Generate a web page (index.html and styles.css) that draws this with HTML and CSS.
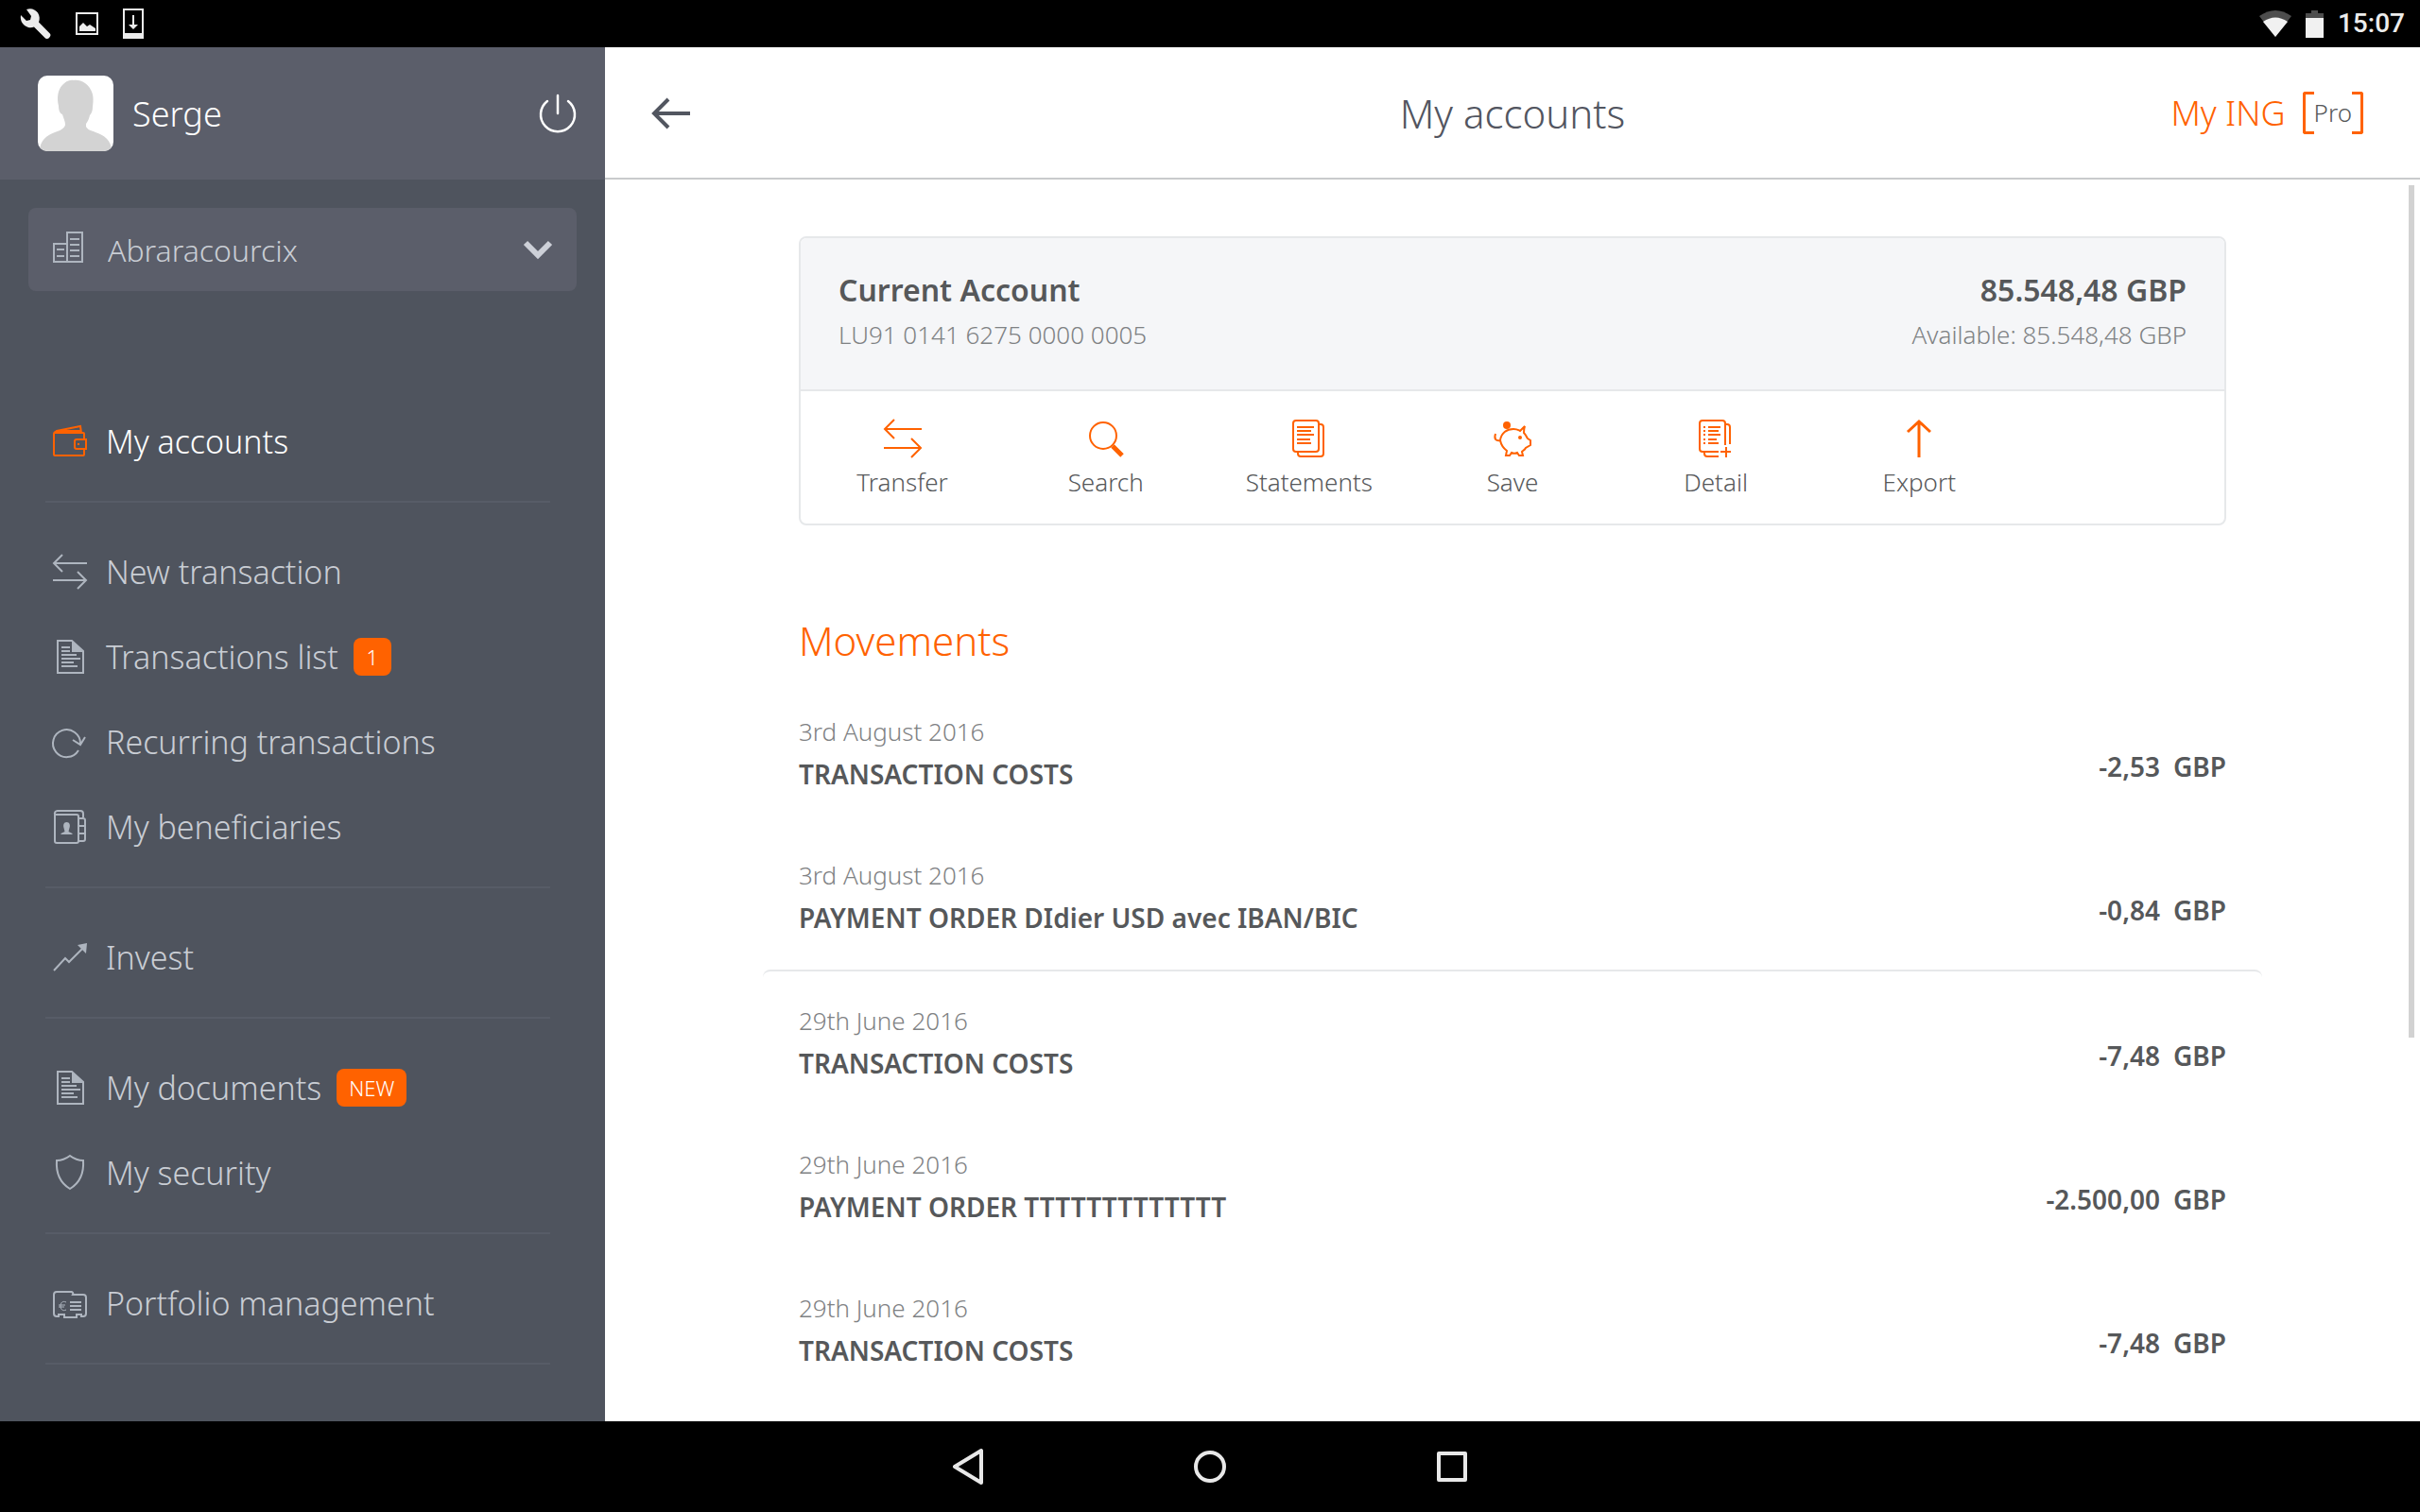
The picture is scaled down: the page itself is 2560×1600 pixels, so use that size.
FILE: index.html
```html
<!DOCTYPE html>
<html lang="en">
<head>
<meta charset="utf-8">
<meta name="viewport" content="width=device-width, initial-scale=1">
<title>My accounts</title>
<link rel="stylesheet" href="styles.css">
</head>
<body>
<svg class="defs" aria-hidden="true">
  <symbol id="i-transfer" viewBox="0 0 36 36">
    <path d="M36 9H1M10 0L1 9l9 9M0 27h35M26 18l9 9-9 9"/>
  </symbol>
  <symbol id="i-doc" viewBox="0 0 36 36">
    <path d="M5 1h15l12 11v23H5z"/>
    <path class="solid" d="M20 1v12h12z"/>
    <path d="M9 8h9M9 12h9M9 16h16M9 20h20M9 24h13M9 28h17"/>
  </symbol>
</svg>

<header class="statusbar">
  <div class="status-group status-left">
    <svg width="32" height="32" viewBox="0 0 32 32" aria-hidden="true"><path fill="#ececec" d="M6 1l5 7-1 4-4 1-6-6C-1 13 2 18 8 20c2 .5 4 .3 6-.4l12 11.8c1.500 1 3 .8 4-.4 1.500-1.500 2-3 .8-4.400L19 14.500c1.300-3 1-7-1-10C15 1 11-1 6 1z"/></svg>
    <svg width="24" height="24" viewBox="0 0 24 24" aria-hidden="true"><path fill="none" stroke="#ececec" stroke-width="2" d="M1 1h22v22H1z"/><path fill="#ececec" d="M4 20v-5l4-4 4 4 3-2 6 4v3z"/></svg>
    <svg width="22" height="32" viewBox="0 0 22 32" aria-hidden="true"><path fill="none" stroke="#ececec" stroke-width="2" d="M1 1h20v30H1z"/><path fill="#ececec" d="M1 26h20v6H1zM10 7h2v10h4l-5 5-5-5h4z"/></svg>
  </div>
  <div class="status-group status-right">
    <svg width="34" height="28" viewBox="0 0 34 28" aria-hidden="true"><path fill="#4d4d4d" d="M0 6Q17-6 34 6L17 28z"/><path fill="#f1f1f1" d="M4 12q13-9 26 0L17 28z"/></svg>
    <svg width="19" height="29" viewBox="0 0 19 29" aria-hidden="true"><path fill="#4d4d4d" d="M6 0h7v3h6v6H0V3h6z"/><path fill="#f1f1f1" d="M0 8h19v21H0z"/></svg>
    <time class="clock">15:07</time>
  </div>
</header>

<div class="app">
  <aside class="sidebar">
    <div class="profile">
      <svg class="avatar" viewBox="0 0 80 80" role="img" aria-label="Profile picture"><path fill="#d3d3d3" d="M2 80C2 68 10 63 18 60c6-2 10-4 11-8 0-4-2-7-3-11-3-1-4-5-4-9-2-8-1-17 4-22 3-3 7-6 12-5 8-1 15 4 18 10 3 5 3 11 2 18 0 4-1 7-3 9-1 4-2 6-4 9v3c2 4 6 4 10 6 9 3 17 8 17 20z"/></svg>
      <span class="profile-name">Serge</span>
      <button class="icon-button" type="button" aria-label="Log out">
        <svg width="38" height="40" viewBox="0 0 38 40" aria-hidden="true"><path fill="none" stroke="#fff" stroke-width="2.500" stroke-linecap="round" d="M19 1v19M8 7a18 18 0 1 0 22 0"/></svg>
      </button>
    </div>

    <div class="company">
      <svg class="icon" viewBox="0 0 36 36" aria-hidden="true"><path d="M15 0h16v31H15zM1 12h14v19H1zM18 7h10M18 13h10M18 19h10M18 25h10M4 18h8M4 25h8"/></svg>
      <select class="company-select" aria-label="Company">
        <option>Abraracourcix</option>
      </select>
      <svg class="chevron" width="30" height="20" viewBox="0 0 30 20" aria-hidden="true"><path fill="none" stroke="#cdd0d8" stroke-width="6" d="M2 3l13 13L28 3"/></svg>
    </div>

    <nav class="menu">
      <ul class="menu-group">
        <li><a class="menu-item active" href="#"><svg class="icon" viewBox="0 0 36 36" aria-hidden="true"><path d="M33 15v-5a1 1 0 0 0-1-1H2a1 1 0 0 0-1 1v22a1 1 0 0 0 1 1h30a1 1 0 0 0 1-1v-5M1 9l3-2 25-5 1 7M4 7h26M25 16h10v10H25a2 2 0 0 1-2-2v-6a2 2 0 0 1 2-2zM27 20v2"/></svg>My accounts</a></li>
      </ul>
      <ul class="menu-group">
        <li><a class="menu-item" href="#"><svg class="icon" aria-hidden="true"><use href="#i-transfer"/></svg>New transaction</a></li>
        <li><a class="menu-item" href="#"><svg class="icon" aria-hidden="true"><use href="#i-doc"/></svg>Transactions list<span class="badge">1</span></a></li>
        <li><a class="menu-item" href="#"><svg class="icon" viewBox="0 0 36 36" aria-hidden="true"><path d="M27 27A14.500 14.500 0 1 1 29 20M21 16l8 5 5-8"/></svg>Recurring transactions</a></li>
        <li><a class="menu-item" href="#"><svg class="icon" viewBox="0 0 36 36" aria-hidden="true"><path d="M2 5v28a2 2 0 0 0 2 2h21a2 2 0 0 0 2-2V7a2 2 0 0 0-2-2H2a3 3 0 0 1 3-4h24a3 3 0 0 1 3 3v4M27 9h5a2 2 0 0 1 2 2v20a2 2 0 0 1-2 2h-5M27 17h7M27 25h7"/><path class="solid" d="M14.500 13c3 0 4 3 3 6l-1 4 4 2v1h-12v-1l4-2-1-4c-1-3 0-6 3-6z"/></svg>My beneficiaries</a></li>
      </ul>
      <ul class="menu-group">
        <li><a class="menu-item" href="#"><svg class="icon" viewBox="0 0 36 36" aria-hidden="true"><path d="M1 32l12-13 4 4L31 9"/><path class="solid" d="M26 5l10-2-1 11z"/></svg>Invest</a></li>
      </ul>
      <ul class="menu-group">
        <li><a class="menu-item" href="#"><svg class="icon" aria-hidden="true"><use href="#i-doc"/></svg>My documents<span class="badge">NEW</span></a></li>
        <li><a class="menu-item" href="#"><svg class="icon" viewBox="0 0 36 36" aria-hidden="true"><path d="M18 0c4 3 8 5 14 5 1 15-4 24-14 30C8 29 3 20 4 5c6 0 10-2 14-5z"/></svg>My security</a></li>
      </ul>
      <ul class="menu-group">
        <li><a class="menu-item" href="#"><svg class="icon" viewBox="0 0 36 36" aria-hidden="true"><path d="M4 6h15a2 2 0 0 1 2 3h11a3 3 0 0 1 3 3v17a3 3 0 0 1-3 3h-2v-2h-5v3H12v-3H6v2H4a3 3 0 0 1-3-3V9a3 3 0 0 1 3-3zM18 17h12M18 21h12M18 25h12"/><path class="fine" d="M14 17c-4-2-6 1-6 4s2 6 6 4M6 20h7M6 22h6"/></svg>Portfolio management</a></li>
      </ul>
    </nav>
  </aside>

  <main class="main">
    <header class="topbar">
      <button class="icon-button" type="button" aria-label="Back">
        <svg width="40" height="34" viewBox="0 0 40 34" aria-hidden="true"><path fill="none" stroke="#525660" stroke-width="4" d="M40 18H3M17 3L2 18l15 15"/></svg>
      </button>
      <h1 class="page-title">My accounts</h1>
      <div class="brand">
        <span class="brand-name">My ING</span>
        <span class="brand-pro">Pro</span>
      </div>
    </header>

    <div class="content">
      <section class="account">
        <div class="account-head">
          <div>
            <h2 class="account-title">Current Account</h2>
            <p class="account-sub">LU91 0141 6275 0000 0005</p>
          </div>
          <div class="account-balance">
            <p class="account-title">85.548,48 GBP</p>
            <p class="account-sub">Available: 85.548,48 GBP</p>
          </div>
        </div>
        <div class="actions">
          <button class="action" type="button"><svg class="action-icon" viewBox="0 0 40 40" aria-hidden="true"><path d="M40 10H1M11 0L1 10l10 10M0 30h39M29 20l10 10-10 10"/></svg>Transfer</button>
          <button class="action" type="button"><svg class="action-icon" viewBox="0 0 40 40" aria-hidden="true"><circle cx="17" cy="17" r="14"/><path class="thick" d="M27 28l10 10"/></svg>Search</button>
          <button class="action" type="button"><svg class="action-icon" viewBox="0 0 40 40" aria-hidden="true"><path d="M6 1h21a3 3 0 0 1 3 3v27a3 3 0 0 1-3 3H6a3 3 0 0 1-3-3V4a3 3 0 0 1 3-3zM30 5h2a3 3 0 0 1 3 3v28a3 3 0 0 1-3 3H11a3 3 0 0 1-3-3v-2M7 8h18M7 12h15M7 16h18M7 21h14M7 25h15"/></svg>Statements</button>
          <button class="action" type="button"><svg class="action-icon" viewBox="0 0 40 40" aria-hidden="true"><path d="M2 15c-2 6 1 8 5 7 1-8 7-12 14-12 4 0 5 1 7 2l5-5c-1 3-1 5-1 7 3 3 3 5 4 6l3 2v5l-5 3c-1 2-3 3-4 4l1 4h-4l-2-3c-2 1-4 1-6 0l-2 3h-4l1-5c-4-3-6-6-7-11"/><circle class="solid" cx="14" cy="6" r="4"/><circle class="solid" cx="28" cy="19" r="2"/></svg>Save</button>
          <button class="action" type="button"><svg class="action-icon" viewBox="0 0 40 40" aria-hidden="true"><path d="M23 34H6a3 3 0 0 1-3-3V4a3 3 0 0 1 3-3h21a3 3 0 0 1 3 3v23M30 5h2a3 3 0 0 1 3 3v18M8 34v2a3 3 0 0 0 3 3h12M7 8h2M12 8h13M7 12h2M12 12h11M7 16h2M12 16h13M7 21h2M12 21h9M7 25h2M12 25h11M31 29v11M25 34h11"/></svg>Detail</button>
          <button class="action" type="button"><svg class="action-icon" viewBox="0 0 40 40" aria-hidden="true"><path class="medium" d="M20 40V2M8 13L20 2l12 11"/></svg>Export</button>
        </div>
      </section>

      <section class="movements">
        <h2 class="movements-title">Movements</h2>
        <ul class="day">
          <li class="movement"><div><p class="date">3rd August 2016</p><p class="label">TRANSACTION COSTS</p></div><p class="amount"><span>-2,53</span><span>GBP</span></p></li>
          <li class="movement"><div><p class="date">3rd August 2016</p><p class="label">PAYMENT ORDER DIdier USD avec IBAN/BIC</p></div><p class="amount"><span>-0,84</span><span>GBP</span></p></li>
        </ul>
        <ul class="day">
          <li class="movement"><div><p class="date">29th June 2016</p><p class="label">TRANSACTION COSTS</p></div><p class="amount"><span>-7,48</span><span>GBP</span></p></li>
          <li class="movement"><div><p class="date">29th June 2016</p><p class="label">PAYMENT ORDER TTTTTTTTTTTTT</p></div><p class="amount"><span>-2.500,00</span><span>GBP</span></p></li>
          <li class="movement"><div><p class="date">29th June 2016</p><p class="label">TRANSACTION COSTS</p></div><p class="amount"><span>-7,48</span><span>GBP</span></p></li>
        </ul>
      </section>
      <div class="scroll-thumb"></div>
    </div>
  </main>
</div>

<footer class="navbar">
  <button class="nav-button" type="button" aria-label="Back"><svg width="40" height="40" viewBox="0 0 40 40" aria-hidden="true"><path d="M34 3v34L6 20z"/></svg></button>
  <button class="nav-button" type="button" aria-label="Home"><svg width="40" height="40" viewBox="0 0 40 40" aria-hidden="true"><circle cx="20" cy="20" r="15"/></svg></button>
  <button class="nav-button" type="button" aria-label="Recent apps"><svg width="40" height="40" viewBox="0 0 40 40" aria-hidden="true"><path d="M6 6h28v28H6z"/></svg></button>
</footer>
</body>
</html>
```
FILE: styles.css
```css
:root {
  --orange: #ff6200;
  --line: #e6e8ea;
  --text: #56585a;
  --muted: #7f8284;
  --menu: #c9cdd4;
}

* {
  box-sizing: border-box;
}

body {
  margin: 0;
  min-height: 100vh;
  display: flex;
  flex-direction: column;
  background: #fff;
  color: var(--text);
  font-family: "Noto Sans", "Open Sans", sans-serif;
  font-weight: 300;
}

h1, h2, p, ul {
  margin: 0;
  padding: 0;
  font-weight: inherit;
}

ul {
  list-style: none;
}

button {
  border: 0;
  padding: 0;
  background: none;
  color: inherit;
  font: inherit;
}

svg {
  display: block;
  flex: none;
  overflow: visible;
}

symbol {
  overflow: visible;
}

.defs {
  position: absolute;
  width: 0;
  height: 0;
}

/* System bars */
.statusbar {
  display: flex;
  justify-content: space-between;
  height: 50px;
  padding: 0 16px 0 22px;
  background: #000;
}

.status-group {
  display: flex;
  align-items: center;
}

.status-left {
  gap: 26px;
}

.status-right {
  gap: 15px;
}

.clock {
  color: #ececec;
  font: 500 28px/50px Roboto, sans-serif;
}

.navbar {
  display: flex;
  justify-content: center;
  height: 96px;
  background: #000;
}

.nav-button {
  display: flex;
  align-items: center;
  justify-content: center;
  width: 256px;
}

.nav-button svg {
  fill: none;
  stroke: #e8e8e8;
  stroke-width: 4px;
  stroke-linejoin: round;
}

.app {
  flex: 1;
  display: grid;
  grid-template-columns: 25% 1fr;
}

/* Sidebar */
.sidebar {
  background: #4f545e;
}

.profile {
  display: flex;
  align-items: center;
  height: 140px;
  padding: 0 31px 0 40px;
  background: #5b5e6a;
}

.avatar {
  width: 80px;
  height: 80px;
  border-radius: 10px;
  background: #fff;
  overflow: hidden;
}

.profile-name {
  flex: 1;
  margin-left: 20px;
  color: #fff;
  font-size: 36px;
}

.company {
  display: flex;
  align-items: center;
  gap: 22px;
  height: 88px;
  margin: 30px 30px 86px;
  padding: 0 26px;
  border-radius: 8px;
  background: #5b5e6a;
}

.company-select {
  flex: 1;
  min-width: 0;
  padding: 0;
  border: 0;
  background: none;
  appearance: none;
  color: var(--menu);
  font: inherit;
  font-size: 32px;
}

.icon {
  width: 36px;
  height: 36px;
  fill: none;
  stroke: #aeb5bf;
  stroke-width: 2px;
}

.icon .fine {
  stroke-width: 1px;
}

.solid {
  fill: #aeb5bf;
  stroke: none;
}

.menu {
  padding: 0 58px 0 48px;
}

.menu-group {
  padding: 28px 8px 18px;
  border-bottom: 2px solid #575c67;
}

.menu-item {
  display: flex;
  align-items: center;
  height: 90px;
  color: var(--menu);
  font-size: 34px;
  text-decoration: none;
  white-space: nowrap;
}

.menu-item .icon {
  margin-right: 20px;
}

.menu-item.active {
  color: #fff;
}

.menu-item.active .icon {
  stroke: var(--orange);
}

.badge {
  min-width: 40px;
  margin-left: 16px;
  padding: 0 13px;
  border-radius: 8px;
  background: var(--orange);
  color: #fff;
  font-size: 22px;
  line-height: 40px;
  text-align: center;
}

/* Main column */
.main {
  display: flex;
  flex-direction: column;
  min-width: 0;
}

.topbar {
  display: grid;
  grid-template-columns: 1fr auto 1fr;
  align-items: center;
  height: 140px;
  padding: 0 60px;
  border-bottom: 2px solid #c9cbcc;
}

.topbar .icon-button {
  justify-self: start;
  margin-left: -10px;
}

.page-title {
  color: #525560;
  font-size: 42px;
}

.brand {
  display: flex;
  align-items: center;
  justify-content: flex-end;
  gap: 18px;
  color: var(--orange);
}

.brand-name {
  font-size: 36px;
}

.brand-pro {
  position: relative;
  padding: 0 12px;
  color: var(--text);
  font-size: 26px;
  line-height: 45px;
}

.brand-pro::before,
.brand-pro::after {
  content: "";
  position: absolute;
  top: 0;
  bottom: 0;
  width: 9px;
  border: 3px solid var(--orange);
}

.brand-pro::before {
  left: 0;
  border-right: 0;
  border-radius: 3px 0 0 3px;
}

.brand-pro::after {
  right: 0;
  border-left: 0;
  border-radius: 0 3px 3px 0;
}

.content {
  position: relative;
  flex: 1;
  padding: 60px 205px 20px;
}

.scroll-thumb {
  position: absolute;
  top: 6px;
  right: 6px;
  width: 6px;
  height: 902px;
  background: #d2d2d2;
}

.account {
  border: 2px solid var(--line);
  border-radius: 8px;
  overflow: hidden;
}

.account-head {
  display: flex;
  justify-content: space-between;
  padding: 32px 40px 40px;
  background: #f5f6f8;
  border-bottom: 2px solid var(--line);
}

.account-balance {
  text-align: right;
}

.account-title {
  font-size: 32px;
  font-weight: 600;
  line-height: 46px;
}

.account-sub {
  margin-top: 6px;
  color: var(--muted);
  font-size: 26px;
  line-height: 36px;
}

.actions {
  display: grid;
  grid-template-columns: repeat(7, 1fr);
  padding: 30px 0 26px;
}

.action {
  display: flex;
  flex-direction: column;
  align-items: center;
  gap: 8px;
  font-size: 26px;
  line-height: 36px;
}

.action-icon {
  width: 40px;
  height: 40px;
  fill: none;
  stroke: var(--orange);
  stroke-width: 2px;
}

.action-icon .medium {
  stroke-width: 3px;
}

.action-icon .thick {
  stroke-width: 5px;
}

.action-icon .solid {
  fill: var(--orange);
}

.movements {
  margin-top: 96px;
}

.movements-title {
  margin-bottom: 18px;
  color: var(--orange);
  font-size: 42px;
  line-height: 52px;
}

.day {
  margin: 0 -38px;
  padding: 0 38px;
}

.day + .day {
  border-top: 2px solid var(--line);
  border-radius: 8px;
}

.movement {
  display: flex;
  align-items: flex-end;
  justify-content: space-between;
  padding: 34px 0 35px;
}

.date {
  margin-bottom: 7px;
  color: var(--muted);
  font-size: 26px;
  line-height: 36px;
}

.label,
.amount {
  font-size: 28px;
  font-weight: 600;
  line-height: 40px;
}

.amount {
  display: flex;
  gap: 14px;
  padding-bottom: 8px;
}
```
